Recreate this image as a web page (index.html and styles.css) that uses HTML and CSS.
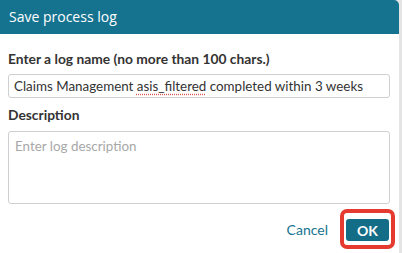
FILE: index.html
```html
<!DOCTYPE html>
<html lang="en">
<head>
  <meta charset="UTF-8" />
  <title>Save process log</title>
  <link rel="stylesheet" href="styles.css">
</head>
<body>
  <div class="dialog">
    <div class="dialog-header">Save process log</div>
    <div class="dialog-body">
      <label class="field-label" for="log-name">Enter a log name (no more than 100 chars.)</label>
      <div class="text-input" id="log-name">Claims Management <span class="misspelled">asis_filtered</span> completed within 3 weeks</div>

      <label class="field-label label-desc" for="log-desc">Description</label>
      <div class="text-area" id="log-desc">Enter log description</div>
    </div>
    <div class="dialog-footer">
      <button class="btn-cancel" type="button">Cancel</button>
      <span class="highlight">
        <button class="btn-ok" type="button">OK</button>
      </span>
    </div>
  </div>
</body>
</html>
```

FILE: styles.css
```css
:root {
  --teal: #16738f;
  --teal-dark: #146d86;
  --text-color: #333;
  --border-color: #cfcfcf;
  --placeholder: #a8a8a8;
  --mark-red: #e53a2f;
}

body {
  margin: 0;
  background: #e4e4e4;
  font-family: Lato, "Open Sans", sans-serif;
  color: var(--text-color);
}

.dialog {
  width: 399px;
  height: 253px;
  background: #fff;
  border-top-right-radius: 5px;
  overflow: hidden;
}

.dialog-header {
  height: 34px;
  background: var(--teal);
  color: #fff;
  font-family: "Open Sans", sans-serif;
  font-size: 14px;
  line-height: 34px;
  padding-left: 9px;
}

.dialog-body {
  padding: 16px 9px 0 8px;
  display: flex;
  flex-direction: column;
}

.field-label {
  font-weight: 700;
  font-size: 13.8px;
  line-height: 18px;
}

.text-input {
  margin-top: 6px;
  height: 22px;
  border: 1px solid var(--border-color);
  border-radius: 3px;
  padding: 0 5px;
  font-size: 13.4px;
  line-height: 22px;
  white-space: nowrap;
}

.misspelled {
  text-decoration: underline dotted #d9534f;
  text-underline-offset: 3px;
}

.label-desc {
  margin-top: 8px;
}

.text-area {
  margin-top: 7px;
  height: 73px;
  border: 1px solid var(--border-color);
  border-radius: 3px;
  padding: 5px 6px;
  box-sizing: border-box;
  font-size: 13.4px;
  line-height: 18px;
  color: var(--placeholder);
}

.dialog-footer {
  display: flex;
  justify-content: flex-end;
  align-items: center;
  padding: 5px 4px 0 0;
}

.btn-cancel {
  background: none;
  border: none;
  font-family: Lato, sans-serif;
  font-size: 14px;
  color: var(--teal);
  margin-right: 12px;
  padding: 0;
}

.highlight {
  display: inline-flex;
  border: 4px solid var(--mark-red);
  border-radius: 7px;
  padding: 6px 2px 4px 2px;
}

.btn-ok {
  width: 43px;
  height: 22px;
  background: var(--teal-dark);
  color: #fff;
  border: none;
  border-radius: 3px;
  font-family: Lato, sans-serif;
  font-weight: 700;
  font-size: 14px;
  padding: 0;
}
```
